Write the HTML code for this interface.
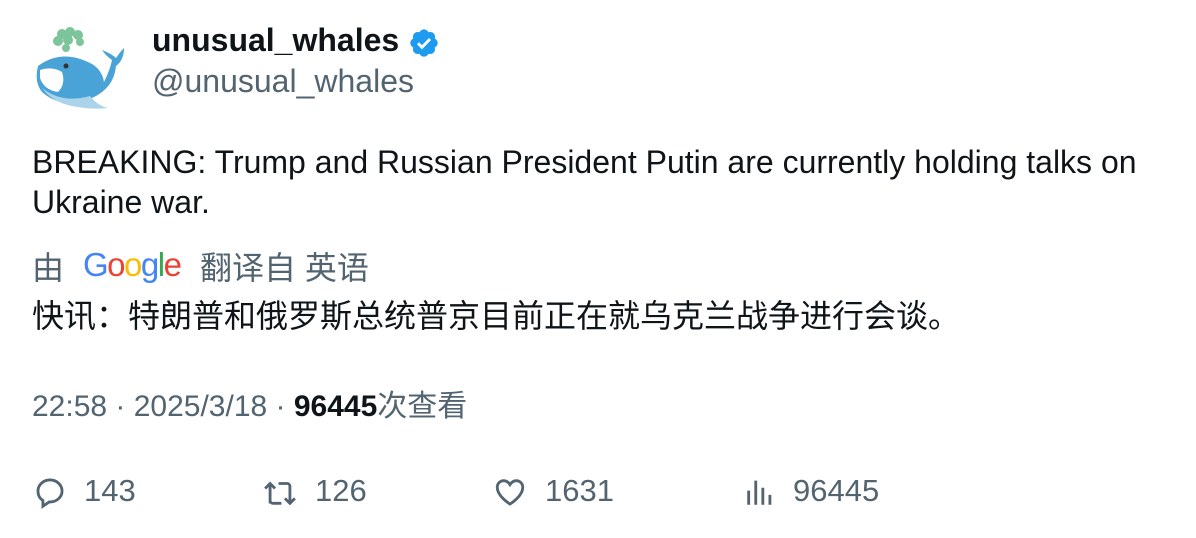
<!DOCTYPE html>
<html><head><meta charset="utf-8"><style>
body{margin:0;width:1196px;height:538px;background:#fff;font-family:"Liberation Sans","Noto Sans CJK SC",sans-serif;color:#0f1419;position:relative;overflow:hidden}
.a{position:absolute;white-space:nowrap}
.g{color:#536471}
</style></head><body>
<svg class="a" style="left:32px;top:26px" width="96" height="84" viewBox="0 0 96 84">
<g fill="#7cc49a"><circle cx="30" cy="8" r="5"/><circle cx="38" cy="6" r="5"/><circle cx="46" cy="9" r="5"/><circle cx="26" cy="15" r="5"/><circle cx="36" cy="14" r="5"/><circle cx="48" cy="16" r="4"/><circle cx="34" cy="22" r="4"/></g>
<path d="M6 40 Q30 22 60 38 Q70 44 72 56 Q78 44 80 34 Q74 30 70 24 Q80 28 84 32 Q88 26 92 22 Q92 34 84 40 Q82 62 60 72 Q30 84 10 66 Q2 56 6 40Z" fill="#4aa3d6"/>
<path d="M8 44 Q20 40 30 46 Q34 58 26 66 Q12 64 8 52Z" fill="#fff"/>
<path d="M10 62 Q30 78 58 70 Q66 80 76 82 Q60 84 40 80 Q20 76 10 62Z" fill="#a9d4ea"/>
<circle cx="34" cy="40" r="2.5" fill="#333"/>
</svg>
<div class="a" style="left:152px;top:22px;font-size:32px;font-weight:bold">unusual_whales</div>
<svg class="a" style="left:408px;top:27px" width="32" height="32" viewBox="0 0 24 24"><path fill="#1d9bf0" d="M22.25 12c0-1.430-.88-2.670-2.190-3.340.46-1.390.2-2.900-.81-3.910s-2.520-1.270-3.910-.81c-.66-1.310-1.910-2.190-3.340-2.190s-2.670.88-3.330 2.190c-1.400-.46-2.910-.2-3.920.81s-1.260 2.520-.8 3.910C2.630 9.330 1.750 10.570 1.750 12s.88 2.670 2.190 3.340c-.46 1.390-.21 2.900.8 3.910s2.520 1.260 3.910.81c.67 1.310 1.910 2.190 3.340 2.190s2.680-.88 3.340-2.190c1.390.45 2.900.2 3.910-.81s1.270-2.520.81-3.910c1.310-.67 2.190-1.910 2.190-3.340z"/><path d="M7.5 12.2l3 3 6-6.200" stroke="#fff" stroke-width="2.200" fill="none"/></svg>
<div class="a g" style="left:152px;top:63px;font-size:32px">@unusual_whales</div>
<div class="a" style="left:32px;top:142px;font-size:32px;line-height:40px">BREAKING: Trump and Russian President Putin are currently holding talks on<br>Ukraine war.</div>
<div class="a g" style="left:32px;top:243px;font-size:32px">由</div>
<div class="a" style="left:83px;top:246px;font-size:33px;letter-spacing:-1.5px"><span style="color:#4285f4">G</span><span style="color:#ea4335">o</span><span style="color:#fbbc05">o</span><span style="color:#4285f4">g</span><span style="color:#34a853">l</span><span style="color:#ea4335">e</span></div>
<div class="a g" style="left:200px;top:243px;font-size:32px">翻译自 英语</div>
<div class="a" style="left:32px;top:291px;font-size:32px">快讯：特朗普和俄罗斯总统普京目前正在就乌克兰战争进行会谈。</div>
<div class="a g" style="left:32px;top:381px;font-size:30px">22:58 · 2025/3/18 · <b style="color:#0f1419">96445</b>次查看</div>
<div class="a g" style="left:0;top:473px;font-size:31px;width:1196px">
<svg class="a" style="left:33px;top:2px" width="34" height="34" viewBox="0 0 24 24"><path fill="none" stroke="#536471" stroke-width="2" d="M12 3.500c4.700 0 8.500 3.400 8.500 7.800 0 4.300-3.800 7.700-8.500 7.700h-.5L7 22v-4C4.700 16.600 3.500 14.200 3.500 11.300 3.500 6.900 7.300 3.500 12 3.500z"/></svg>
<span class="a" style="left:84px">143</span>
<svg class="a" style="left:261px;top:2px" width="38" height="34" viewBox="0 0 24 24"><path fill="none" stroke="#536471" stroke-width="2" d="M5 20V6M1.500 9.500 5 6l3.500 3.500M11 6h6a2 2 0 0 1 2 2v12M15.500 16.500 19 20l3.500-3.500M13 20H7a2 2 0 0 1-2-2"/></svg>
<span class="a" style="left:315px">126</span>
<svg class="a" style="left:493px;top:2px" width="34" height="34" viewBox="0 0 24 24"><path fill="none" stroke="#536471" stroke-width="2" d="M12 20.500S3 15 3 8.800C3 6 5 4 7.500 4 9.500 4 11 5.200 12 6.800 13 5.200 14.500 4 16.500 4 19 4 21 6 21 8.800 21 15 12 20.500 12 20.500z"/></svg>
<span class="a" style="left:545px">1631</span>
<svg class="a" style="left:743px;top:2px" width="34" height="34" viewBox="0 0 24 24"><path stroke="#536471" stroke-width="2" d="M4 21V11M9 21V4M14 21V9M19 21V14"/></svg>
<span class="a" style="left:793px">96445</span>
</div>
</body></html>
